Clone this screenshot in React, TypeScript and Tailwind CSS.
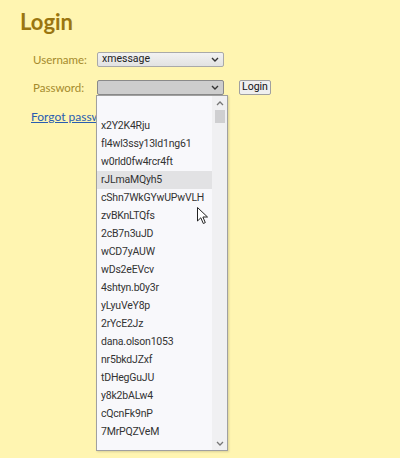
import React from 'react';

const passwords = [
    '',
    'x2Y2K4Rju',
    'fl4wl3ssy13ld1ng61',
    'w0rld0fw4rcr4ft',
    'rJLmaMQyh5',
    'cShn7WkGYwUPwVLH',
    'zvBKnLTQfs',
    '2cB7n3uJD',
    'wCD7yAUW',
    'wDs2eEVcv',
    '4shtyn.b0y3r',
    'yLyuVeY8p',
    '2rYcE2Jz',
    'dana.olson1053',
    'nr5bkdJZxf',
    'tDHegGuJU',
    'y8k2bALw4',
    'cQcnFk9nP',
    '7MrPQZVeM',
];

const Chevron: React.FC = () => (
    <svg width="8" height="5" viewBox="0 0 8 5" className="shrink-0">
        <path d="M1 1 L4 4 L7 1" fill="none" stroke="#333" strokeWidth="1.4" />
    </svg>
);

const App: React.FC = () => {
    return (
        <div className="relative w-[400px] h-[458px] overflow-hidden bg-[#fff5b1] font-['Lato','Open_Sans',sans-serif]">
            <div className="pl-[20px] pt-[8px]">
                <h1 className="text-[22px] leading-[28px] font-bold text-[#9a7510]">Login</h1>
            </div>
            <div className="pl-[33px] pt-[16px] flex flex-col">
                <div className="flex items-center h-[15px]">
                    <span className="w-[64px] text-[11.5px] text-[#a58a2c]">Username:</span>
                    <div className="flex items-center justify-between w-[127px] h-[15px] px-[4px] border border-[#a9a9a9] rounded-[2px] bg-gradient-to-b from-[#f2f2f2] to-[#e2e2e2] font-['Roboto',sans-serif] text-[10.5px] text-[#222]">
                        <span className="leading-none">xmessage</span>
                        <Chevron />
                    </div>
                </div>
                <div className="flex items-center h-[15px] mt-[13px]">
                    <span className="w-[64px] text-[11.5px] text-[#a58a2c]">Password:</span>
                    <div className="flex items-center justify-end w-[127px] h-[15px] px-[4px] border border-[#8a8a8a] rounded-[2px] bg-[#cdcdcd]">
                        <Chevron />
                    </div>
                    <button className="ml-[15px] h-[15px] px-[2px] border border-[#a0a0a0] rounded-[2px] bg-[#efefef] font-['Roboto',sans-serif] text-[10.5px] leading-none text-[#111]">
                        Login
                    </button>
                </div>
                <a className="mt-[13px] -ml-[2px] text-[12px] text-[#2a5db0] underline">Forgot password?</a>
            </div>

            <div className="absolute left-[96px] top-[95px] w-[132px] h-[356px] flex border border-[#a0a0a0] bg-[#f8f8fb] shadow-[1px_1px_2px_rgba(0,0,0,0.15)]">
                <ul className="flex-1 pt-[3px] font-['Roboto',sans-serif] text-[10.5px] tracking-[-0.2px] text-[#333]">
                    {passwords.map((p, i) => (
                        <li key={i} className={`h-[18px] leading-[18px] pl-[4px] ${i === 4 ? 'bg-[#e2e2e4]' : ''}`}>
                            {p}
                        </li>
                    ))}
                </ul>
                <div className="w-[15px] flex flex-col items-center bg-[#f0f0f2]">
                    <div className="h-[14px] flex items-center justify-center">
                        <svg width="8" height="5" viewBox="0 0 8 5">
                            <path d="M1 4 L4 1 L7 4" fill="none" stroke="#777" strokeWidth="1.3" />
                        </svg>
                    </div>
                    <div className="w-[10px] h-[13px] bg-[#cfcfd1]" />
                    <div className="flex-1" />
                    <div className="h-[14px] flex items-center justify-center">
                        <svg width="8" height="5" viewBox="0 0 8 5">
                            <path d="M1 1 L4 4 L7 1" fill="none" stroke="#777" strokeWidth="1.3" />
                        </svg>
                    </div>
                </div>
            </div>

            <svg className="absolute left-[197px] top-[207px]" width="12" height="18" viewBox="0 0 12 18">
                <path d="M0.5 0.5 L0.5 14 L3.8 10.8 L6.3 16.5 L8.3 15.6 L5.9 10 L10.5 10 Z" fill="#fff" stroke="#222" strokeWidth="1" strokeLinejoin="round" />
            </svg>
        </div>
    );
};

export default App;
